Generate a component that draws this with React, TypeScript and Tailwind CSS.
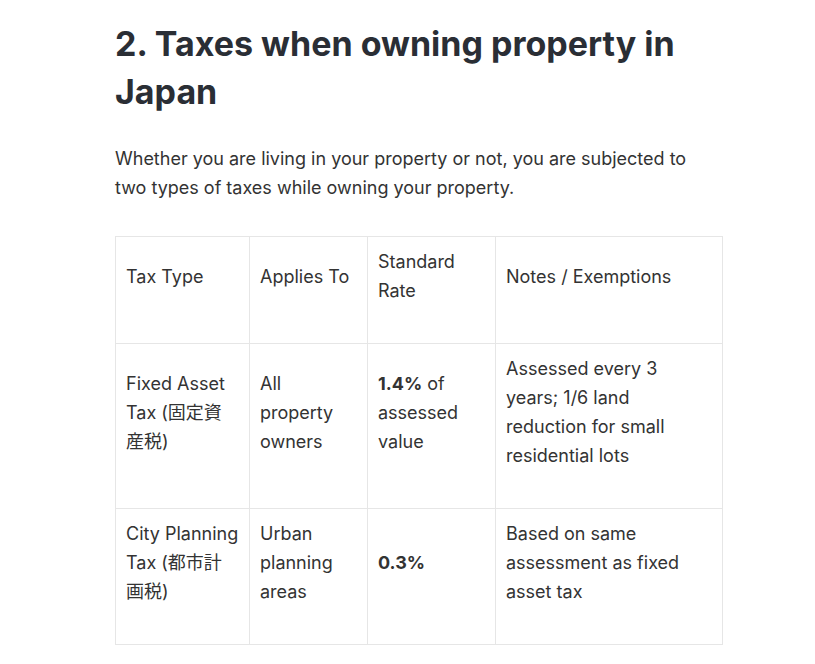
import React from "react";

const font = { fontFamily: 'Inter, "Noto Sans CJK JP", sans-serif' };

export default function App() {
  const cell = "border border-[#e6e6e6] px-[10px] py-[10px] align-middle";
  const P = ({ children }: { children: React.ReactNode }) => <p className="mb-[28px]">{children}</p>;
  return (
    <div className="w-[815px] h-[664px] bg-white overflow-hidden" style={font}>
      <div className="ml-[115px] w-[607px] pt-5">
        <h2 className="text-[34px] leading-[48px] font-bold text-[#2a2e35]">
          2. Taxes when owning property in Japan
        </h2>
        <p className="mt-7 text-[18px] leading-[29px] text-[#333]">
          Whether you are living in your property or not, you are subjected to two types of taxes while owning your property.
        </p>
        <table className="mt-[34px] border-collapse text-[18px] leading-[29px] text-[#333] table-fixed w-[607px]">
          <colgroup>
            <col className="w-[134px]" />
            <col className="w-[118px]" />
            <col className="w-[128px]" />
            <col className="w-[227px]" />
          </colgroup>
          <tbody>
            <tr>
              <td className={cell}><P>Tax Type</P></td>
              <td className={cell}><P>Applies To</P></td>
              <td className={cell}><P>Standard Rate</P></td>
              <td className={cell}><P>Notes / Exemptions</P></td>
            </tr>
            <tr>
              <td className={cell}><P>Fixed Asset Tax (固定資産税)</P></td>
              <td className={cell}><P>All property owners</P></td>
              <td className={cell}><P><strong className="font-bold">1.4%</strong> of assessed value</P></td>
              <td className={cell}><P>Assessed every 3 years; 1/6 land reduction for small residential lots</P></td>
            </tr>
            <tr>
              <td className={cell}><P>City Planning Tax (都市計画税)</P></td>
              <td className={cell}><P>Urban planning areas</P></td>
              <td className={cell}><P><strong className="font-bold">0.3%</strong></P></td>
              <td className={cell}><P>Based on same assessment as fixed asset tax</P></td>
            </tr>
          </tbody>
        </table>
      </div>
    </div>
  );
}
